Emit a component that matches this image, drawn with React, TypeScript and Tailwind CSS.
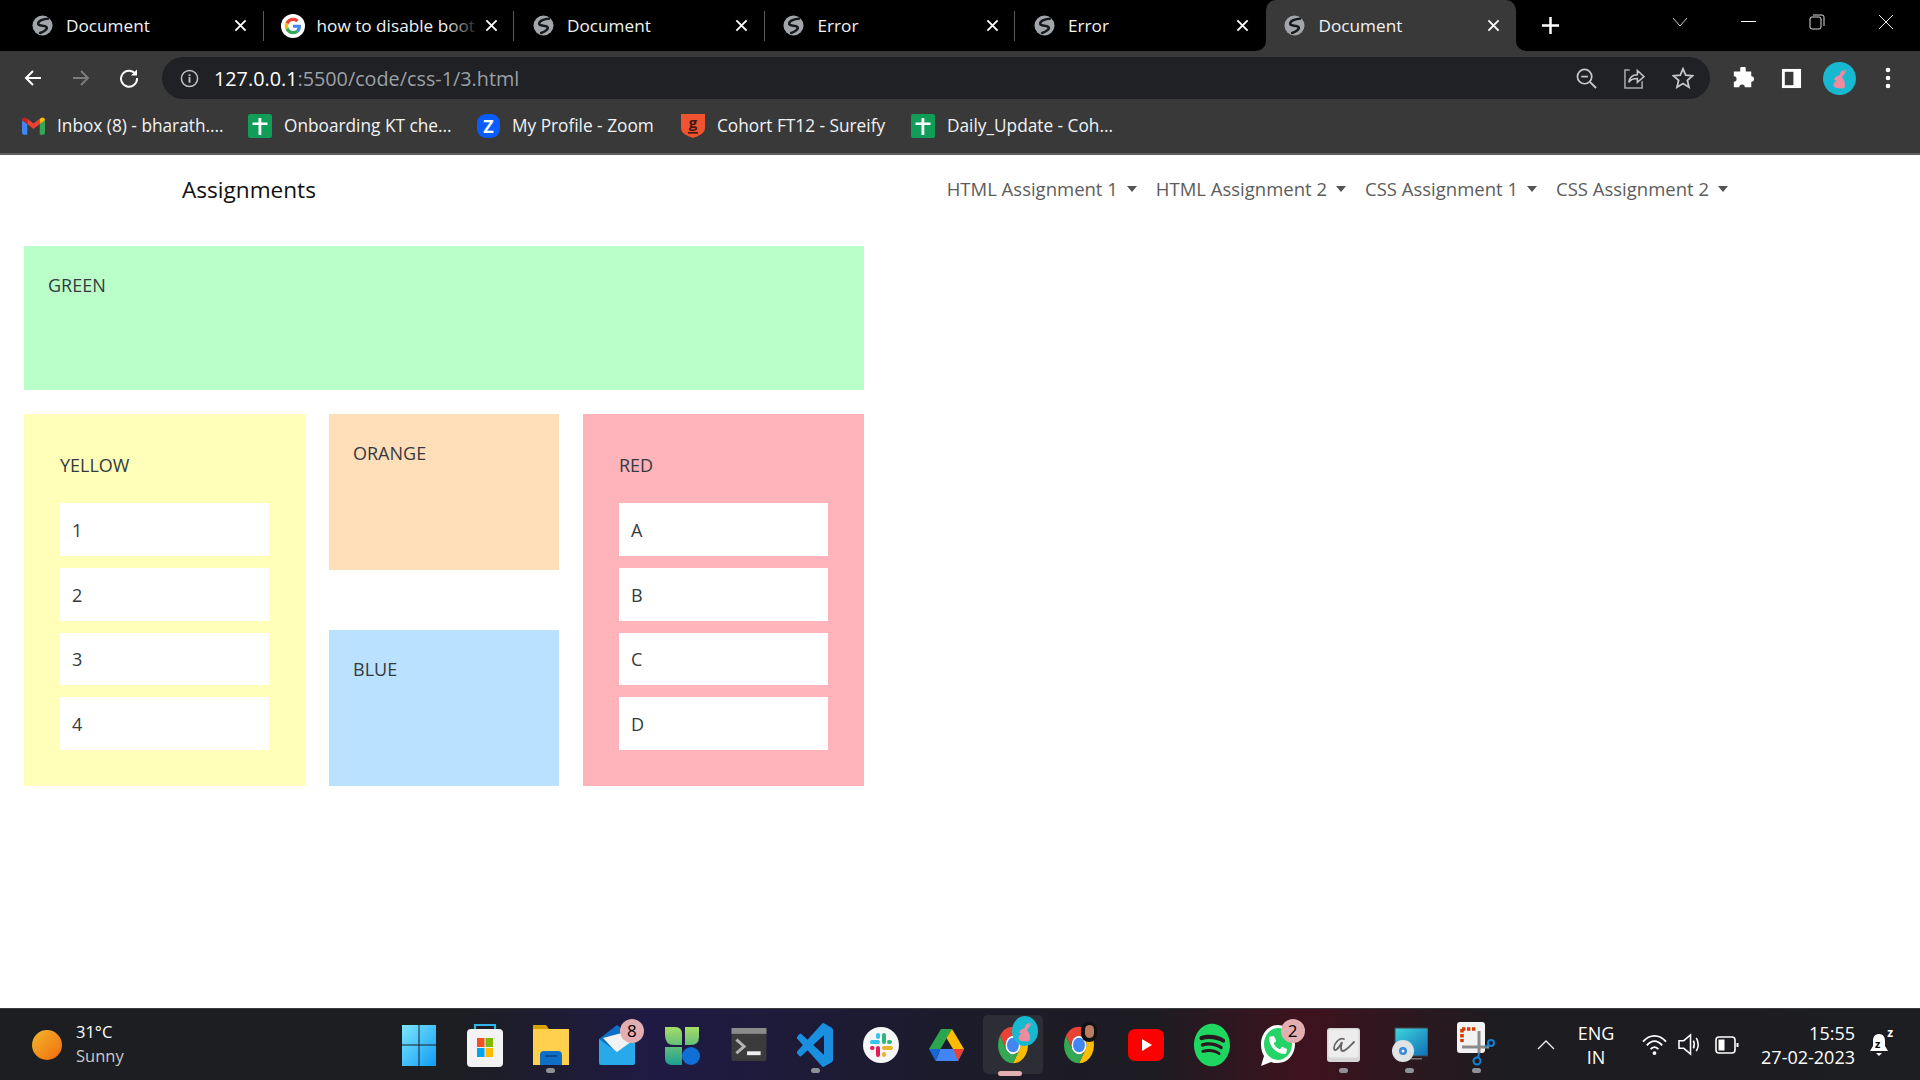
import React from "react";
import { FaSpotify, FaPhone } from "react-icons/fa";

const Globe = () => (
  <svg viewBox="0 0 22 22" className="w-[21px] h-[21px] shrink-0">
    <circle cx="11" cy="11" r="10.5" fill="#a2a6ab" />
    <path d="M17 3.8 C12.5 4 6 6 6.5 9.5 C7 12 13 10.5 15 12.5 C16.8 14.5 13 17.5 8.5 18.8" fill="none" stroke="#17181a" strokeWidth="2.6" strokeLinecap="round" />
  </svg>
);
const GoogleG = () => (
  <svg viewBox="0 0 48 48" className="w-[24px] h-[24px] shrink-0">
    <circle cx="24" cy="24" r="24" fill="#fff" />
    <g transform="translate(7.5 7.5) scale(0.69)">
      <path fill="#EA4335" d="M24 9.5c3.5 0 6.7 1.2 9.2 3.6l6.9-6.9C35.9 2.4 30.5 0 24 0 14.6 0 6.5 5.4 2.6 13.2l8 6.2C12.4 13.7 17.7 9.5 24 9.5z" />
      <path fill="#4285F4" d="M46.98 24.55c0-1.57-.15-3.09-.38-4.55H24v9.02h12.94c-.58 2.96-2.26 5.48-4.78 7.18l7.73 6c4.51-4.18 7.09-10.36 7.09-17.65z" />
      <path fill="#FBBC05" d="M10.53 28.59c-.48-1.45-.76-2.99-.76-4.59s.27-3.14.76-4.59l-7.98-6.19C.92 16.46 0 20.12 0 24c0 3.88.92 7.54 2.56 10.78l7.97-6.19z" />
      <path fill="#34A853" d="M24 48c6.48 0 11.93-2.13 15.89-5.81l-7.73-6c-2.15 1.45-4.92 2.3-8.16 2.3-6.26 0-11.57-4.22-13.47-9.91l-7.98 6.19C6.51 42.62 14.62 48 24 48z" />
    </g>
  </svg>
);
const Gmail = () => (
  <svg viewBox="0 0 24 18" className="w-[23px] h-[18px] shrink-0">
    <path d="M0 3 L0 16 Q0 18 2 18 L5.5 18 L5.5 7Z" fill="#4285f4" />
    <path d="M24 3 L24 16 Q24 18 22 18 L18.5 18 L18.5 7Z" fill="#34a853" />
    <path d="M5.5 7 L12 12 L18.5 7 L18.5 1.5 L12 6.5 L5.5 1.5Z" fill="#ea4335" />
    <path d="M0 3 Q0 0 3 0 L5.5 1.5 L5.5 7Z" fill="#c5221f" />
    <path d="M24 3 Q24 0 21 0 L18.5 1.5 L18.5 7Z" fill="#fbbc04" />
  </svg>
);
const Sheet = () => (
  <svg viewBox="0 0 24 24" className="w-[24px] h-[24px] shrink-0">
    <rect width="24" height="24" rx="2" fill="#0f9d58" />
    <rect x="4.5" y="8.5" width="15" height="2.5" fill="#fff" />
    <rect x="10.5" y="4" width="2.8" height="17" fill="#fff" />
  </svg>
);
const ZoomLogo = () => (
  <span className="w-[23px] h-[24px] shrink-0 rounded-[9px] bg-[#0b5cff] flex items-center justify-center text-white font-bold text-[18px] leading-none">Z</span>
);
const Cohort = () => (
  <span className="relative w-[24px] h-[24px] shrink-0 flex items-center justify-center">
    <svg viewBox="0 0 24 24" className="absolute inset-0 w-[24px] h-[24px]">
      <path d="M0 0 H24 V14 C24 20 17 22 12 24 C7 22 0 20 0 14Z" fill="#f0532f" />
      <rect x="7" y="18" width="10" height="1.6" fill="#3a1a12" />
    </svg>
    <span className="relative text-[15px] font-bold leading-none text-[#3a1a12] mb-[7px]">g</span>
  </span>
);

const Tab = ({ title, icon, active, fade, sep }: { title: string; icon?: React.ReactNode; active?: boolean; fade?: boolean; sep?: boolean }) => (
  <div className={`relative h-[51px] flex items-center pl-[17px] shrink-0 w-[250.5px] ${active ? "bg-[#393939] rounded-t-[10px]" : ""}`}>
    {active && (
      <>
        <span className="absolute bottom-0 -left-[10px] w-[10px] h-[10px] bg-[#393939]"><span className="block w-full h-full bg-black rounded-br-[10px]" /></span>
        <span className="absolute bottom-0 -right-[10px] w-[10px] h-[10px] bg-[#393939]"><span className="block w-full h-full bg-black rounded-bl-[10px]" /></span>
      </>
    )}
    <span className="w-[24px] flex justify-center shrink-0">{icon ?? <Globe />}</span>
    <span className="relative ml-[12px] w-[163px] h-[26px] leading-[26px] whitespace-nowrap text-[17.2px] text-[#f1f3f4]">
      {title}
      {fade && <span className="absolute right-0 top-0 h-full w-[34px] bg-gradient-to-r from-transparent to-black" />}
    </span>
    <svg viewBox="0 0 14 14" className="w-[13px] h-[13px] ml-[5px] shrink-0">
      <path d="M1.5 1.5 L12.5 12.5 M12.5 1.5 L1.5 12.5" stroke="#fff" strokeWidth="2" />
    </svg>
    {sep && <span className="absolute right-0 top-[11px] h-[30px] w-px bg-[#5a5a5a]" />}
  </div>
);

const Bookmark = ({ icon, label, w }: { icon: React.ReactNode; label: string; w: string }) => (
  <div className={`flex items-center gap-[12px] shrink-0 text-[17.25px] text-[#f1f3f4] whitespace-nowrap ${w}`}>
    {icon}
    <span>{label}</span>
  </div>
);

const ChromeLogo = ({ children }: { children?: React.ReactNode }) => (
  <span className="relative block w-[36px] h-[44px]">
    <svg viewBox="0 0 48 48" className="w-[36px] h-[44px]" preserveAspectRatio="none">
      <path fill="#ea4335" d="M6.68 14 A20 20 0 0 1 41.32 14 H24 A10 10 0 0 0 15.34 29Z" />
      <path fill="#fbbc04" d="M41.32 14 A20 20 0 0 1 24 44 L32.66 29 A10 10 0 0 0 24 14 H41.32Z" />
      <path fill="#34a853" d="M24 44 A20 20 0 0 1 6.68 14 L15.34 29 A10 10 0 0 0 32.66 29Z" />
      <circle cx="24" cy="24" r="10" fill="#fff" />
      <circle cx="24" cy="24" r="8" fill="#4285f4" />
    </svg>
    {children}
  </span>
);

const Rabbit = () => (
  <path d="M24 8 L19.5 10.5 L23 7 L18 9.5 L16.5 13 L12.5 15 L11 18 L13.5 18 L11 21 L10.5 24 L13 26 L20 26.5 L22 25 L21.5 19 L19 15 L21 12.5Z" fill="#f08a9e" />
);

const TaskIcon = ({ children, dot, badge, tile }: { children: React.ReactNode; dot?: boolean; badge?: string; tile?: boolean }) => (
  <div className="relative w-[66.1px] h-full flex items-center justify-center shrink-0">
    {tile && <span className="absolute left-[3px] right-[3px] top-[6px] bottom-[6px] bg-[#2c2d35] rounded-[5px]" />}
    <span className="relative">{children}</span>
    {badge && (
      <span className="absolute left-[36px] top-[10px] w-[24px] h-[24px] rounded-full bg-[#e3aeb1] text-black text-[17px] leading-[24px] text-center">{badge}</span>
    )}
    {dot && <span className="absolute left-[28.5px] bottom-[7px] w-[9px] h-[5px] rounded-full bg-[#8f9197]" />}
    {tile && <span className="absolute left-[18px] bottom-[4px] w-[24px] h-[5px] rounded-full bg-[#e3aeb1]" />}
  </div>
);

const Panel = ({ label, cls }: { label: string; cls: string }) => (
  <div className={`px-[24px] pt-[25px] ${cls}`}><p className="leading-[29px]">{label}</p></div>
);
const ListPanel = ({ label, cls, items }: { label: string; cls: string; items: string[] }) => (
  <div className={`px-[36px] pt-[37px] ${cls}`}>
    <p className="leading-[29px] mb-[23px]">{label}</p>
    <div className="flex flex-col gap-[12px]">
      {items.map((i) => (
        <div key={i} className="bg-white px-[12px] pt-[2px] h-[52.75px] flex items-center">{i}</div>
      ))}
    </div>
  </div>
);

const NavItem = ({ label }: { label: string }) => (
  <span className="flex items-center whitespace-nowrap">
    {label}
    <span className="ml-[9px] w-0 h-0 border-x-[5.5px] border-x-transparent border-t-[6px] border-t-[#555]" />
  </span>
);

export default function App() {
  const stroke = { fill: "none", stroke: "#fff", strokeWidth: 2 } as const;
  return (
    <div className="h-screen w-[1920px] overflow-hidden flex flex-col bg-white font-['Open_Sans',sans-serif] text-[#212529]">
      {/* tab strip */}
      <div className="h-[51px] bg-black flex items-center pl-[13px] shrink-0">
        <Tab title="Document" sep />
        <Tab title="how to disable boot" icon={<GoogleG />} fade sep />
        <Tab title="Document" sep />
        <Tab title="Error" sep />
        <Tab title="Error" />
        <Tab title="Document" active />
        <svg viewBox="0 0 20 20" className="w-[19px] h-[19px] ml-[25px] shrink-0"><path d="M10 1 V19 M1 10 H19" stroke="#fff" strokeWidth="2.6" /></svg>
        <div className="flex items-center mb-[8px]">
          <svg viewBox="0 0 16 10" className="w-[16px] h-[10px] ml-[112px]"><path d="M1 1 L8 9 L15 1" fill="none" stroke="#d0d0d0" strokeWidth="1" /></svg>
          <span className="ml-[53px] w-[15px] h-px bg-white" />
          <svg viewBox="0 0 16 16" className="w-[16px] h-[16px] ml-[53px]"><rect x="1" y="3" width="11" height="12" rx="2" fill="none" stroke="#ddd" /><path d="M4 1 H13 Q15 1 15 3 V12" fill="none" stroke="#ddd" /></svg>
          <svg viewBox="0 0 16 16" className="w-[16px] h-[16px] ml-[53px]"><path d="M1 1 L15 15 M15 1 L1 15" stroke="#eee" strokeWidth="1" /></svg>
        </div>
      </div>
      {/* toolbar */}
      <div className="h-[51px] bg-[#393939] flex items-center shrink-0 pt-[3px]">
        <div className="w-[162px] shrink-0 flex items-center pl-[23px] gap-[28px]">
          <svg viewBox="0 0 20 20" className="w-[20px] h-[20px]"><path d="M18 10 H3 M10 3 L3 10 L10 17" {...stroke} /></svg>
          <svg viewBox="0 0 20 20" className="w-[20px] h-[20px]"><path d="M2 10 H17 M10 3 L17 10 L10 17" fill="none" stroke="#7c7c7c" strokeWidth="2" /></svg>
          <svg viewBox="0 0 20 20" className="w-[20px] h-[20px]"><path d="M16.5 6 A8 8 0 1 0 18 10" {...stroke} /><path d="M18 1.5 V7.5 H12 Z" fill="#fff" /></svg>
        </div>
        <div className="h-[42px] w-[1548px] rounded-full bg-[#202124] flex items-center pl-[18px] shrink-0">
          <svg viewBox="0 0 20 20" className="w-[19px] h-[19px] shrink-0"><circle cx="10" cy="10" r="8.5" fill="none" stroke="#bdc1c6" strokeWidth="1.6" /><rect x="9" y="8.5" width="2" height="6" fill="#bdc1c6" /><rect x="9" y="5.5" width="2" height="2" fill="#bdc1c6" /></svg>
          <span className="ml-[15px] mt-[1px] text-[19.8px] text-[#9aa0a6] whitespace-nowrap"><span className="text-white">127.0.0.1</span>:5500/code/css-1/3.html</span>
          <div className="ml-auto flex items-center pr-[16px] gap-[27px]">
            <svg viewBox="0 0 22 22" className="w-[21px] h-[21px]"><circle cx="9" cy="9" r="7.5" fill="none" stroke="#c4c7c9" strokeWidth="1.8" /><path d="M5.5 9 H12.5" stroke="#c4c7c9" strokeWidth="1.8" /><path d="M14.5 14.5 L21 21" stroke="#c4c7c9" strokeWidth="2" /></svg>
            <svg viewBox="0 0 22 22" className="w-[21px] h-[21px]"><path d="M6 2 H1 V21 H19 V14" fill="none" stroke="#a8a8a8" strokeWidth="1.6" /><path d="M5 15 C6 9 10 7 14 7 V2.5 L21 9 L14 15 V11 C10 11 7 12 5 15Z" fill="none" stroke="#c4c7c9" strokeWidth="1.6" /></svg>
            <svg viewBox="0 0 24 24" className="w-[22px] h-[22px]"><path d="M12 2 L15 9 L22.5 9.6 L16.8 14.6 L18.5 22 L12 18 L5.5 22 L7.2 14.6 L1.5 9.6 L9 9Z" fill="none" stroke="#c4c7c9" strokeWidth="2" /></svg>
          </div>
        </div>
        <div className="flex items-center pl-[22px] shrink-0">
          <svg viewBox="0 0 24 24" className="w-[22px] h-[22px]"><path d="M9 2 a3 3 0 0 1 6 0 V5 H21 V10 a3 3 0 0 1 0 6 V22 H14 a3 3 0 0 0 -6 0 H2 V16 a3 3 0 0 0 0 -6 V5 H9Z" fill="#fff" /></svg>
          <svg viewBox="0 0 22 22" className="w-[21px] h-[21px] ml-[27px]"><rect x="1" y="1" width="20" height="20" fill="#fff" /><rect x="4" y="4" width="9" height="14" fill="#393939" /></svg>
          <svg viewBox="0 0 33 33" className="w-[33px] h-[33px] ml-[21px]"><circle cx="16.5" cy="16.5" r="16.5" fill="#17b9d0" /><Rabbit /></svg>
          <svg viewBox="0 0 6 22" className="w-[6px] h-[22px] ml-[29px]"><circle cx="3" cy="3" r="2.3" fill="#fff" /><circle cx="3" cy="11" r="2.3" fill="#fff" /><circle cx="3" cy="19" r="2.3" fill="#fff" /></svg>
        </div>
      </div>
      {/* bookmarks */}
      <div className="h-[53px] bg-[#393939] border-b-2 border-[#5f5f5f] flex items-center pl-[22px] pb-[4px] shrink-0">
        <Bookmark icon={<Gmail />} label="Inbox (8) - bharath...." w="w-[226px]" />
        <Bookmark icon={<Sheet />} label="Onboarding KT che..." w="w-[229px]" />
        <Bookmark icon={<ZoomLogo />} label="My Profile - Zoom" w="w-[204px]" />
        <Bookmark icon={<Cohort />} label="Cohort FT12 - Sureify" w="w-[230px]" />
        <Bookmark icon={<Sheet />} label="Daily_Update - Coh..." w="w-[230px]" />
      </div>
      {/* page */}
      <div className="flex-1 bg-white min-h-0">
        <nav className="h-[67px] flex items-center pl-[182px] pr-[192px]">
          <span className="text-[22.6px] text-[#111] mt-[3px]">Assignments</span>
          <div className="ml-auto flex items-center gap-[19px] text-[18.5px] text-[#5c5c5c] mt-[1px]">
            <NavItem label="HTML Assignment 1" />
            <NavItem label="HTML Assignment 2" />
            <NavItem label="CSS Assignment 1" />
            <NavItem label="CSS Assignment 2" />
          </div>
        </nav>
        <main className="p-[24px] w-[888px] text-[18px] text-[#343a40]">
          <div className="h-[144px] bg-[#baffc9] px-[24px] pt-[25px]"><p className="leading-[29px]">GREEN</p></div>
          <div className="mt-[24px] grid grid-cols-[281px_230px_281px] gap-[24px] h-[372px]">
            <ListPanel label="YELLOW" cls="bg-[#ffffba]" items={["1", "2", "3", "4"]} />
            <div className="flex flex-col justify-between">
              <Panel label="ORANGE" cls="h-[156px] bg-[#ffdfba]" />
              <Panel label="BLUE" cls="h-[156px] bg-[#bae1ff]" />
            </div>
            <ListPanel label="RED" cls="bg-[#ffb3ba]" items={["A", "B", "C", "D"]} />
          </div>
        </main>
      </div>
      {/* taskbar */}
      <div className="h-[72px] shrink-0 border-t border-[#3b3c40] flex items-center bg-[linear-gradient(90deg,#1d1e22_0%,#1d1e22_24%,#1f1a44_34%,#1c1b2a_50%,#1d1c22_60%,#3e121e_68%,#1d1c20_78%,#1d1e22_100%)] text-white">
        <div className="w-[385.5px] shrink-0 flex items-center h-full pl-[32px]">
          <span className="w-[30px] h-[30px] rounded-full bg-gradient-to-br from-[#f0b52b] to-[#f06a0a]" />
          <div className="ml-[14px] text-[16.5px] leading-[24px] -mt-[2px]">
            <div>31°C</div>
            <div className="text-[#c9c9c9]">Sunny</div>
          </div>
        </div>
        <div className="flex items-center h-full">
          <TaskIcon>
            <svg viewBox="0 0 36 44" className="w-[36px] h-[44px]">
              <defs><linearGradient id="w" x1="0" y1="0" x2="1" y2="1"><stop offset="0" stopColor="#7ce6ff" /><stop offset="1" stopColor="#0f9cf5" /></linearGradient></defs>
              <path d="M1 2 H17.5 V21.5 H1Z M18.5 2 H35 V21.5 H18.5Z M1 22.5 H17.5 V43 H1Z M18.5 22.5 H35 V43 H18.5Z" fill="url(#w)" />
            </svg>
          </TaskIcon>
          <TaskIcon>
            <svg viewBox="0 0 36 44" className="w-[36px] h-[44px]">
              <path d="M8 7 V2 H28 V7" fill="none" stroke="#2fb5ea" strokeWidth="2.2" />
              <rect x="0" y="6" width="36" height="38" rx="4" fill="#f3f3f3" />
              <rect x="10" y="15" width="7.5" height="9" fill="#f25022" /><rect x="18.5" y="15" width="7.5" height="9" fill="#7fba00" />
              <rect x="10" y="25" width="7.5" height="9" fill="#00a4ef" /><rect x="18.5" y="25" width="7.5" height="9" fill="#ffb900" />
            </svg>
          </TaskIcon>
          <TaskIcon dot>
            <svg viewBox="0 0 36 44" className="w-[36px] h-[44px]">
              <path d="M0 2 H13 L16 6 H36 V42 H0Z" fill="#d9a200" />
              <rect x="0" y="6" width="36" height="36" fill="#ffd04e" />
              <path d="M7 42 V32 Q7 28 11 28 H25 Q29 28 29 32 V42Z" fill="#0f6fc6" />
              <rect x="12" y="32" width="12" height="2" fill="#0a4e90" />
            </svg>
          </TaskIcon>
          <TaskIcon badge="8">
            <svg viewBox="0 0 36 44" className="w-[36px] h-[44px]">
              <path d="M18 2 L36 16 V38 H0 V16Z" fill="#0f6fc6" />
              <path d="M4 15 L30 8 L32 22 L18 30Z" fill="#f2f2f2" />
              <path d="M0 16 L18 29 L36 16 V40 Q36 42 34 42 H2 Q0 42 0 40Z" fill="#27a9ea" />
            </svg>
          </TaskIcon>
          <TaskIcon>
            <svg viewBox="0 0 36 44" className="w-[36px] h-[44px]">
              <defs><linearGradient id="b" x1="0" y1="0" x2="0" y2="1"><stop offset="0" stopColor="#a6dd66" /><stop offset="1" stopColor="#1e9e92" /></linearGradient></defs>
              <path d="M0 4 H10 Q17 4 17 11 V22 H9 Q0 22 0 12Z M20 4 H34 V14 Q34 22 26 22 H20Z M0 24 H17 V42 H7 Q0 42 0 35Z" fill="url(#b)" />
              <circle cx="26" cy="33" r="9" fill="#0f6fd6" />
            </svg>
          </TaskIcon>
          <TaskIcon>
            <svg viewBox="0 0 36 34" className="w-[36px] h-[33px]">
              <rect width="36" height="34" rx="2" fill="#3b3b3b" />
              <rect width="36" height="6" fill="#8b8b8b" />
              <path d="M5 12 L13 19 L5 26" fill="none" stroke="#b5b5b5" strokeWidth="3" />
              <rect x="16" y="24" width="14" height="4" fill="#eee" />
            </svg>
          </TaskIcon>
          <TaskIcon dot>
            <svg viewBox="0 0 24 24" className="w-[36px] h-[44px]" preserveAspectRatio="none">
              <path fill="#1a8fe0" d="M23.15 2.587L18.21.21a1.494 1.494 0 0 0-1.705.29l-9.46 8.63-4.12-3.128a.999.999 0 0 0-1.276.057L.327 7.261A1 1 0 0 0 .326 8.74L3.899 12 .326 15.26a1 1 0 0 0 .001 1.479L1.65 17.94a.999.999 0 0 0 1.276.057l4.12-3.128 9.46 8.63a1.492 1.492 0 0 0 1.704.29l4.942-2.377A1.5 1.5 0 0 0 24 20.06V3.939a1.5 1.5 0 0 0-.85-1.352zm-5.146 14.861L10.826 12l7.178-5.448v10.896z" />
            </svg>
          </TaskIcon>
          <TaskIcon>
            <svg viewBox="0 0 36 36" className="w-[36px] h-[36px]">
              <circle cx="18" cy="18" r="18" fill="#f7f7f7" />
              <path d="M9 15 H15" stroke="#36c5f0" strokeWidth="4" strokeLinecap="round" />
              <path d="M15 8 V10" stroke="#36c5f0" strokeWidth="4" strokeLinecap="round" />
              <path d="M21 8 V15" stroke="#2eb67d" strokeWidth="4" strokeLinecap="round" />
              <path d="M27 15 H26" stroke="#2eb67d" strokeWidth="4" strokeLinecap="round" />
              <path d="M21 21 H28" stroke="#ecb22e" strokeWidth="4" strokeLinecap="round" />
              <path d="M21 28 V27" stroke="#ecb22e" strokeWidth="4" strokeLinecap="round" />
              <path d="M15 21 V28" stroke="#e01e5a" strokeWidth="4" strokeLinecap="round" />
              <path d="M9 21 H9.5" stroke="#e01e5a" strokeWidth="4" strokeLinecap="round" />
            </svg>
          </TaskIcon>
          <TaskIcon>
            <svg viewBox="0 0 36 32" className="w-[36px] h-[32px]">
              <path d="M12 0 H23 L11.5 20 H0 Z" fill="#2da44e" />
              <path d="M23 0 L35 20 H24 L17.5 9Z" fill="#fbbc04" />
              <path d="M6.5 32 L11.5 20 H35 L29 32Z" fill="#4285f4" />
              <path d="M35 20 L29 32 L24 20Z" fill="#ea4335" />
              <path d="M0 20 L6.5 32 L11.5 20Z" fill="#1967d2" />
            </svg>
          </TaskIcon>
          <TaskIcon tile>
            <ChromeLogo>
              <svg viewBox="0 0 26 30" className="absolute left-[17px] -top-[7px] w-[26px] h-[30px]">
                <ellipse cx="13" cy="15" rx="13" ry="15" fill="#17b9d0" />
                <g transform="translate(-4 -1)"><Rabbit /></g>
              </svg>
            </ChromeLogo>
          </TaskIcon>
          <TaskIcon>
            <ChromeLogo>
              <span className="absolute left-[20px] -top-[1px] w-[16px] h-[20px] rounded-full bg-[#111] flex items-center justify-center">
                <span className="w-[9px] h-[13px] rounded-full bg-[#b97d64]" />
              </span>
            </ChromeLogo>
          </TaskIcon>
          <TaskIcon>
            <svg viewBox="0 0 36 32" className="w-[36px] h-[32px]">
              <rect width="36" height="32" rx="7" fill="#ff0000" />
              <path d="M14 10 L24 16 L14 22Z" fill="#fff" />
            </svg>
          </TaskIcon>
          <TaskIcon>
            <span className="block relative w-[36px] h-[44px]"><FaSpotify className="w-[36px] h-[44px] text-[#1ed760]" preserveAspectRatio="none" /></span>
          </TaskIcon>
          <TaskIcon badge="2">
            <span className="relative block w-[36px] h-[44px]">
              <svg viewBox="0 0 36 44" className="w-[36px] h-[44px]">
                <path d="M18 2 C8 2 1 11 1 21 C1 26 2 30 4 33 L1 43 L11 39 C13 40 15 40 18 40 C28 40 35 31 35 21 C35 11 28 2 18 2Z" fill="#fff" />
                <ellipse cx="18" cy="21" rx="14" ry="16" fill="#25d366" />
              </svg>
              <FaPhone className="absolute left-[9px] top-[12px] w-[18px] h-[20px] text-white -scale-x-100" />
            </span>
          </TaskIcon>
          <TaskIcon dot>
            <svg viewBox="0 0 33 34" className="w-[33px] h-[34px]">
              <rect width="33" height="34" rx="3" fill="#d6d6d6" />
              <rect x="1.5" y="1.5" width="30" height="28" rx="2" fill="#ededed" />
              <path d="M17 11 C12 9 7 16 7 20 C7 24 11 22 15 14 C14 18 13 23 16 23 C19 23 24 17 27 14" fill="none" stroke="#666" strokeWidth="1.8" strokeLinecap="round" />
            </svg>
          </TaskIcon>
          <TaskIcon dot>
            <svg viewBox="0 0 36 44" className="w-[36px] h-[44px]">
              <defs><linearGradient id="d" x1="0" y1="0" x2="1" y2="1"><stop offset="0" stopColor="#3fd6e0" /><stop offset="1" stopColor="#0f6fb4" /></linearGradient></defs>
              <rect x="3" y="5" width="33" height="28" fill="url(#d)" stroke="#444" strokeWidth="1" />
              <rect x="16" y="35" width="14" height="1.5" fill="#777" />
              <circle cx="11" cy="28" r="11" fill="#dfe3e6" />
              <circle cx="11" cy="28" r="4" fill="#3b88d6" />
              <circle cx="11" cy="28" r="1.5" fill="#eef" />
            </svg>
          </TaskIcon>
          <TaskIcon dot>
            <svg viewBox="0 0 38 46" className="w-[38px] h-[46px]">
              <rect x="0" y="0" width="28" height="31" rx="3" fill="#f2f2f2" />
              <path d="M5 7 H20 M5 7 V20" stroke="#d83b01" strokeWidth="3.6" strokeDasharray="3.4 1.6" fill="none" />
              <path d="M22 9 V31 M5 25 H32" stroke="#8b8b8b" strokeWidth="3" />
              <circle cx="34" cy="21" r="3" fill="none" stroke="#1283d8" strokeWidth="2" />
              <circle cx="20" cy="39" r="3.5" fill="none" stroke="#1283d8" strokeWidth="2" />
              <path d="M22 31 L21 36 M28 25 L32 22.5" stroke="#1283d8" strokeWidth="2" />
            </svg>
          </TaskIcon>
        </div>
        <div className="flex items-center h-full flex-1">
          <svg viewBox="0 0 18 10" className="w-[18px] h-[10px] ml-[28px] shrink-0"><path d="M1 9 L9 1 L17 9" fill="none" stroke="#eee" strokeWidth="1.3" /></svg>
          <div className="w-[60px] ml-[11px] text-center text-[18px] leading-[24px] shrink-0"><div>ENG</div><div>IN</div></div>
          <svg viewBox="0 0 26 22" className="w-[25px] h-[21px] ml-[16px] shrink-0"><path d="M1 8 C8 0 18 0 25 8 M5 12 C10 6 16 6 21 12 M9 16 C11 13 15 13 17 16" fill="none" stroke="#fff" strokeWidth="2" /><circle cx="13" cy="20" r="2" fill="#fff" /></svg>
          <svg viewBox="0 0 26 24" className="w-[25px] h-[23px] ml-[11px] shrink-0"><path d="M1 8 H6 L13 2 V22 L6 16 H1Z" fill="none" stroke="#fff" strokeWidth="1.6" /><path d="M16 8 Q18 12 16 16 M19 5 Q23 12 19 19" fill="none" stroke="#fff" strokeWidth="1.6" /></svg>
          <svg viewBox="0 0 24 18" className="w-[24px] h-[18px] ml-[12px] shrink-0"><rect x="1" y="1" width="19" height="16" rx="3" fill="none" stroke="#fff" strokeWidth="1.6" /><rect x="3.5" y="3.5" width="6" height="11" fill="#fff" /><rect x="21.5" y="7" width="2" height="4" fill="#fff" /></svg>
          <div className="ml-auto text-right text-[18px] leading-[24px] shrink-0"><div>15:55</div><div>27-02-2023</div></div>
          <span className="relative w-[22px] h-[26px] ml-[13px] mr-[30px] shrink-0 -mt-[2px]">
            <svg viewBox="0 0 22 26" className="w-[22px] h-[26px]"><path d="M11 3 C6 3 5 7 5 10 V15 L2 20 H20 L17 15 V10 C17 7 16 3 11 3Z" fill="#fff" /><path d="M8 22 H14 L11 25Z" fill="#fff" /></svg>
            <span className="absolute left-[7px] top-[7px] text-[11px] leading-none font-bold text-black">z</span>
            <span className="absolute right-[-3px] top-[-4px] text-[12px] leading-none font-bold text-white">z</span>
          </span>
        </div>
      </div>
    </div>
  );
}
